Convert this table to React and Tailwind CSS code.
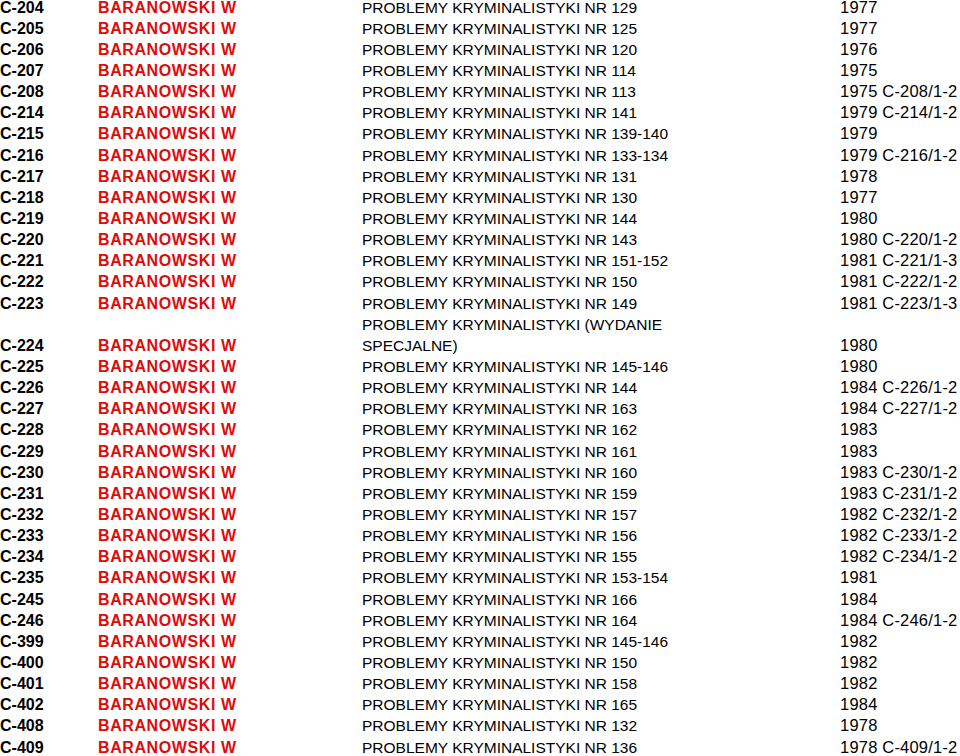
const rows = [
  ["C-204", "PROBLEMY KRYMINALISTYKI NR 129", "1977", ""],
  ["C-205", "PROBLEMY KRYMINALISTYKI NR 125", "1977", ""],
  ["C-206", "PROBLEMY KRYMINALISTYKI NR 120", "1976", ""],
  ["C-207", "PROBLEMY KRYMINALISTYKI NR 114", "1975", ""],
  ["C-208", "PROBLEMY KRYMINALISTYKI NR 113", "1975", "C-208/1-2"],
  ["C-214", "PROBLEMY KRYMINALISTYKI NR 141", "1979", "C-214/1-2"],
  ["C-215", "PROBLEMY KRYMINALISTYKI NR 139-140", "1979", ""],
  ["C-216", "PROBLEMY KRYMINALISTYKI NR 133-134", "1979", "C-216/1-2"],
  ["C-217", "PROBLEMY KRYMINALISTYKI NR 131", "1978", ""],
  ["C-218", "PROBLEMY KRYMINALISTYKI NR 130", "1977", ""],
  ["C-219", "PROBLEMY KRYMINALISTYKI NR 144", "1980", ""],
  ["C-220", "PROBLEMY KRYMINALISTYKI NR 143", "1980", "C-220/1-2"],
  ["C-221", "PROBLEMY KRYMINALISTYKI NR 151-152", "1981", "C-221/1-3"],
  ["C-222", "PROBLEMY KRYMINALISTYKI NR 150", "1981", "C-222/1-2"],
  ["C-223", "PROBLEMY KRYMINALISTYKI NR 149", "1981", "C-223/1-3"],
  ["C-224", "PROBLEMY KRYMINALISTYKI (WYDANIE SPECJALNE)", "1980", ""],
  ["C-225", "PROBLEMY KRYMINALISTYKI NR 145-146", "1980", ""],
  ["C-226", "PROBLEMY KRYMINALISTYKI NR 144", "1984", "C-226/1-2"],
  ["C-227", "PROBLEMY KRYMINALISTYKI NR 163", "1984", "C-227/1-2"],
  ["C-228", "PROBLEMY KRYMINALISTYKI NR 162", "1983", ""],
  ["C-229", "PROBLEMY KRYMINALISTYKI NR 161", "1983", ""],
  ["C-230", "PROBLEMY KRYMINALISTYKI NR 160", "1983", "C-230/1-2"],
  ["C-231", "PROBLEMY KRYMINALISTYKI NR 159", "1983", "C-231/1-2"],
  ["C-232", "PROBLEMY KRYMINALISTYKI NR 157", "1982", "C-232/1-2"],
  ["C-233", "PROBLEMY KRYMINALISTYKI NR 156", "1982", "C-233/1-2"],
  ["C-234", "PROBLEMY KRYMINALISTYKI NR 155", "1982", "C-234/1-2"],
  ["C-235", "PROBLEMY KRYMINALISTYKI NR 153-154", "1981", ""],
  ["C-245", "PROBLEMY KRYMINALISTYKI NR 166", "1984", ""],
  ["C-246", "PROBLEMY KRYMINALISTYKI NR 164", "1984", "C-246/1-2"],
  ["C-399", "PROBLEMY KRYMINALISTYKI NR 145-146", "1982", ""],
  ["C-400", "PROBLEMY KRYMINALISTYKI NR 150", "1982", ""],
  ["C-401", "PROBLEMY KRYMINALISTYKI NR 158", "1982", ""],
  ["C-402", "PROBLEMY KRYMINALISTYKI NR 165", "1984", ""],
  ["C-408", "PROBLEMY KRYMINALISTYKI NR 132", "1978", ""],
  ["C-409", "PROBLEMY KRYMINALISTYKI NR 136", "1978", "C-409/1-2"],
];

export default function App() {
  return (
    <div
      className="w-[960px] h-[756px] overflow-hidden bg-white text-black"
      style={{ fontFamily: '"Liberation Sans", Arial, sans-serif' }}
    >
      <div className="-mt-[3.4px] flex flex-col">
        {rows.map(([code, title, year, extra]) => (
          <div key={code} className="flex items-end leading-[21.14px] whitespace-nowrap">
            <div className="w-[98px] shrink-0 text-[16px] font-bold">{code}</div>
            <div className="w-[264px] shrink-0 text-[16px] font-bold text-[#e00a0a] tracking-[0.6px]">
              BARANOWSKI W
            </div>
            <div className="w-[478px] shrink-0 text-[15.5px]">
              <div className="w-[350px] whitespace-normal">{title}</div>
            </div>
            <div className="text-[16.5px] tracking-[0.2px]">
              {year}
              {extra ? " " + extra : ""}
            </div>
          </div>
        ))}
      </div>
    </div>
  );
}
